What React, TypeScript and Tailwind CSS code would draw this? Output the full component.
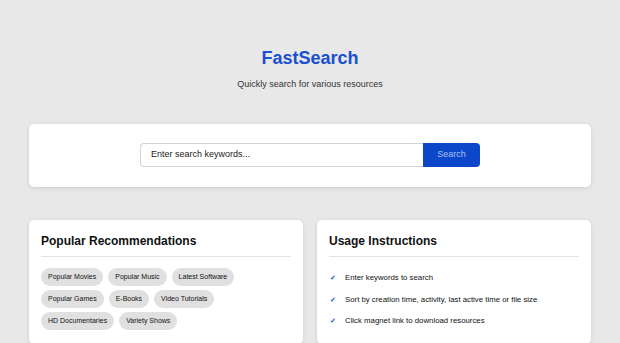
import React from 'react';

const tags = [
  'Popular Movies',
  'Popular Music',
  'Latest Software',
  'Popular Games',
  'E-Books',
  'Video Tutorials',
  'HD Documentaries',
  'Variety Shows',
];

const steps = [
  'Enter keywords to search',
  'Sort by creation time, activity, last active time or file size',
  'Click magnet link to download resources',
];

export default function App() {
  return (
    <div className="min-h-[343px] bg-[#e8e8e8] font-['Liberation_Sans',Arial,sans-serif] overflow-hidden">
      <div className="mx-auto w-[562px] pt-[47px]">
        {/* Header */}
        <div className="text-center">
          <h1 className="text-[18px] leading-[22px] font-bold text-[#1a4fcf]">FastSearch</h1>
          <p className="mt-[9px] text-[9px] leading-[12px] text-[#333]">Quickly search for various resources</p>
        </div>

        {/* Search card */}
        <div className="mt-[34px] bg-white rounded-[5px] shadow-[0_1px_4px_rgba(0,0,0,0.12)] pt-[19px] pb-[20px] flex justify-center">
          <div className="flex w-[340px] h-[24px]">
            <input
              placeholder="Enter search keywords..."
              className="flex-1 min-w-0 border border-[#d4d4d4] border-r-0 rounded-l-[4px] px-[10px] text-[9px] text-[#222] placeholder:text-[#222] outline-none"
            />
            <button className="w-[57px] bg-[#0d47c9] text-[#a9c0f0] text-[9px] rounded-r-[4px]">Search</button>
          </div>
        </div>

        {/* Bottom cards */}
        <div className="mt-[33px] grid grid-cols-2 gap-[14px]">
          <div className="bg-white rounded-[5px] shadow-[0_1px_4px_rgba(0,0,0,0.12)] px-[12px] pt-[13px] pb-[14px]">
            <h2 className="text-[12px] leading-[16px] font-bold text-[#111] pb-[7px] border-b border-[#e4e4e4]">
              Popular Recommendations
            </h2>
            <div className="mt-[11px] flex flex-wrap gap-x-[5px] gap-y-[4px]">
              {tags.map((t) => (
                <span
                  key={t}
                  className="h-[18px] px-[7px] flex items-center rounded-full bg-[#e0e0e0] text-[7px] text-[#111]"
                >
                  {t}
                </span>
              ))}
            </div>
          </div>

          <div className="bg-white rounded-[5px] shadow-[0_1px_4px_rgba(0,0,0,0.12)] px-[12px] pt-[13px] pb-[14px]">
            <h2 className="text-[12px] leading-[16px] font-bold text-[#111] pb-[7px] border-b border-[#e4e4e4]">
              Usage Instructions
            </h2>
            <ul className="mt-[16px] flex flex-col gap-[11.5px]">
              {steps.map((s) => (
                <li key={s} className="flex items-center text-[7.8px] leading-[10px] text-[#111]">
                  <span className="w-[15px] ml-[1px] text-[7px] font-bold text-[#1a4fcf]">✓</span>
                  {s}
                </li>
              ))}
            </ul>
          </div>
        </div>
      </div>
    </div>
  );
}
